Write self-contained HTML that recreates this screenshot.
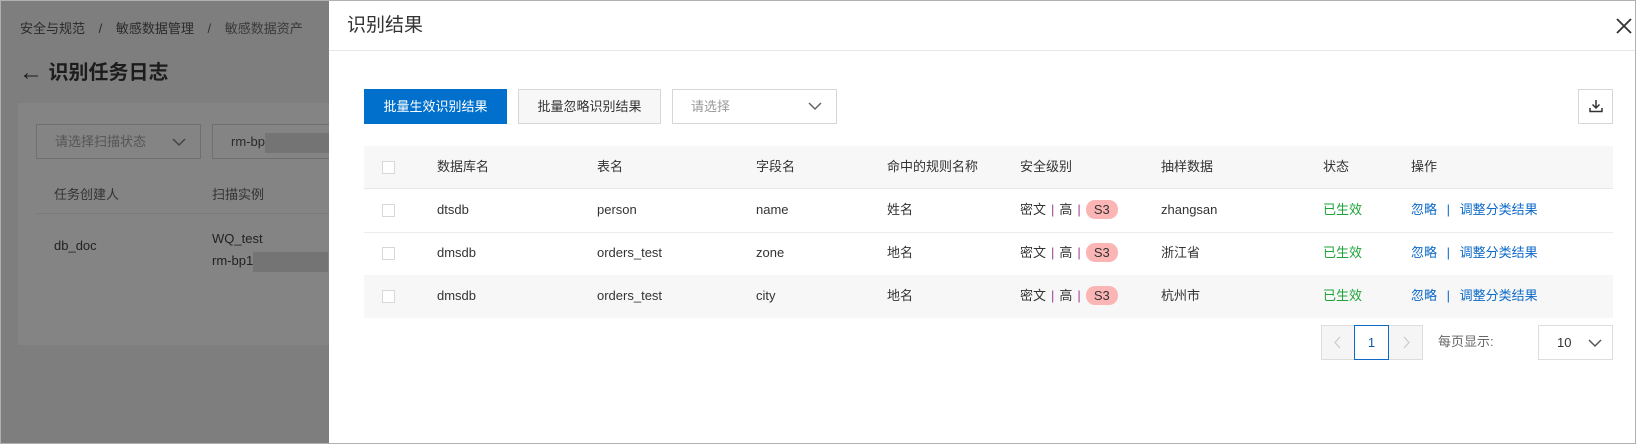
<!DOCTYPE html>
<html><head><meta charset="utf-8"><style>
*{box-sizing:border-box;margin:0;padding:0}
body{width:1636px;height:444px;overflow:hidden;position:relative;background:#7e7e7e;font-family:"Liberation Sans","Noto Sans CJK SC",sans-serif;font-size:13px;color:#333}
.abs{position:absolute}
.frame{position:absolute;left:0;top:0;width:1636px;height:444px;border:1px solid #b0b0b0;pointer-events:none;z-index:10}
.panel{position:absolute;left:329px;top:0;width:1307px;height:444px;background:#fff}
.btn{position:absolute;top:89px;height:35px;line-height:35px;text-align:center;font-size:13px}
.th,.td{position:absolute;white-space:nowrap;line-height:20px;height:20px}
.cb{position:absolute;left:382px;width:13px;height:13px;border:1px solid #d8d8d8;background:#fff}
.sep{color:#a0409a;margin:0 5px}
.s3{display:inline-block;background:#fbb5b5;border-radius:9px;padding:0 8px;height:19px;line-height:19px;vertical-align:top}
.g{color:#1ea33a}.b{color:#0d6ac8}
</style></head><body>
<div class="abs" style="left:20px;top:18px;color:#2a2a2a;font-size:13px;white-space:nowrap">安全与规范 <span style="margin:0 10px">/</span> 敏感数据管理 <span style="margin:0 10px;color:#333">/</span> <span style="color:#3a3a3a">敏感数据资产</span></div>
<div class="abs" style="left:19px;top:56px;color:#1c1c1c;font-size:20px;font-weight:bold;white-space:nowrap"><span style="font-size:24px;font-weight:normal;vertical-align:-1px">←</span> 识别任务日志</div>
<div class="abs" style="left:18px;top:103px;width:311px;height:242px;background:#848484"></div>
<div class="abs" style="left:36px;top:124px;width:165px;height:35px;border:1px solid #6f6f6f;color:#555;line-height:33px;padding-left:18px;white-space:nowrap">请选择扫描状态<svg style="position:absolute;right:14px;top:13px" width="14" height="9" viewBox="0 0 14 9"><path d="M1 1L7 7L13 1" fill="none" stroke="#444" stroke-width="1.5"/></svg></div>
<div class="abs" style="left:212px;top:124px;width:117px;height:35px;border:1px solid #6f6f6f;border-right:none;color:#2a2a2a;line-height:33px;padding-left:18px;white-space:nowrap;overflow:hidden">rm-bp<span style="display:inline-block;width:65px;height:20px;background:#747474;vertical-align:middle"></span></div>
<div class="abs" style="left:36px;top:176px;width:293px;height:38px;border-bottom:1px solid #7a7a7a;color:#333;line-height:38px"><span style="margin-left:18px">任务创建人</span><span style="position:absolute;left:176px">扫描实例</span></div>
<div class="abs" style="left:54px;top:238px;color:#222">db_doc</div>
<div class="abs" style="left:212px;top:228px;color:#222;line-height:22px;white-space:nowrap;width:117px;overflow:hidden">WQ_test<br>rm-bp1<span style="display:inline-block;width:75px;height:20px;background:#747474;vertical-align:middle"></span></div>

<div class="panel">
  <div class="abs" style="left:18px;top:10px;font-size:19px;color:#333">识别结果</div>
  <svg class="abs" style="left:1286px;top:17px" width="18" height="18" viewBox="0 0 18 18"><path d="M2 2L16 16M16 2L2 16" stroke="#333" stroke-width="1.8"/></svg>
  <div class="abs" style="left:0;top:50px;width:1307px;height:1px;background:#e6e6e6"></div>
  <div class="abs" style="right:0;top:0;width:1px;height:444px;background:#b8b8b8"></div>
</div>
<div class="btn" style="left:364px;width:143px;background:#0070cc;color:#fff">批量生效识别结果</div>
<div class="btn" style="left:518px;width:143px;border:1px solid #d7d7d7;background:#f7f7f7;line-height:33px">批量忽略识别结果</div>
<div class="btn" style="left:672px;width:165px;border:1px solid #d7d7d7;text-align:left;padding-left:18px;color:#999;line-height:33px">请选择<svg style="position:absolute;right:14px;top:12px" width="14" height="9" viewBox="0 0 14 9"><path d="M1 1L7 7L13 1" fill="none" stroke="#666" stroke-width="1.5"/></svg></div>
<div class="abs" style="left:1578px;top:89px;width:35px;height:35px;border:1px solid #d7d7d7"><svg style="position:absolute;left:10px;top:9px" width="14" height="14" viewBox="0 0 14 14"><path d="M7 1V9M3.5 5.5L7 9L10.5 5.5M1 9V12.5H13V9" fill="none" stroke="#333" stroke-width="1.5"/></svg></div>

<div class="abs" style="left:364px;top:146px;width:1249px;height:43px;background:#f7f7f7;border-bottom:1px solid #e8e8e8"></div>
<div class="abs" style="left:364px;top:232px;width:1249px;height:1px;background:#ececec"></div>
<div class="abs" style="left:364px;top:275px;width:1249px;height:1px;background:#ececec"></div>
<div class="abs" style="left:364px;top:275px;width:1249px;height:43px;background:#f7f7f7"></div>

<div class="cb" style="top:161px"></div>
<div class="th" style="left:437px;top:157px">数据库名</div>
<div class="th" style="left:597px;top:157px">表名</div>
<div class="th" style="left:756px;top:157px">字段名</div>
<div class="th" style="left:887px;top:157px">命中的规则名称</div>
<div class="th" style="left:1020px;top:157px">安全级别</div>
<div class="th" style="left:1161px;top:157px">抽样数据</div>
<div class="th" style="left:1323px;top:157px">状态</div>
<div class="th" style="left:1411px;top:157px">操作</div>

<div class="cb" style="top:204px"></div>
<div class="td" style="left:437px;top:200px">dtsdb</div>
<div class="td" style="left:597px;top:200px">person</div>
<div class="td" style="left:756px;top:200px">name</div>
<div class="td" style="left:887px;top:200px">姓名</div>
<div class="td" style="left:1020px;top:200px">密文<span class="sep">|</span>高<span class="sep">|</span><span class="s3">S3</span></div>
<div class="td" style="left:1161px;top:200px">zhangsan</div>
<div class="td g" style="left:1323px;top:200px">已生效</div>
<div class="td b" style="left:1411px;top:200px">忽略 <span style="margin:0 6px">|</span> 调整分类结果</div>

<div class="cb" style="top:247px"></div>
<div class="td" style="left:437px;top:243px">dmsdb</div>
<div class="td" style="left:597px;top:243px">orders_test</div>
<div class="td" style="left:756px;top:243px">zone</div>
<div class="td" style="left:887px;top:243px">地名</div>
<div class="td" style="left:1020px;top:243px">密文<span class="sep">|</span>高<span class="sep">|</span><span class="s3">S3</span></div>
<div class="td" style="left:1161px;top:243px">浙江省</div>
<div class="td g" style="left:1323px;top:243px">已生效</div>
<div class="td b" style="left:1411px;top:243px">忽略 <span style="margin:0 6px">|</span> 调整分类结果</div>

<div class="cb" style="top:290px"></div>
<div class="td" style="left:437px;top:286px">dmsdb</div>
<div class="td" style="left:597px;top:286px">orders_test</div>
<div class="td" style="left:756px;top:286px">city</div>
<div class="td" style="left:887px;top:286px">地名</div>
<div class="td" style="left:1020px;top:286px">密文<span class="sep">|</span>高<span class="sep">|</span><span class="s3">S3</span></div>
<div class="td" style="left:1161px;top:286px">杭州市</div>
<div class="td g" style="left:1323px;top:286px">已生效</div>
<div class="td b" style="left:1411px;top:286px">忽略 <span style="margin:0 6px">|</span> 调整分类结果</div>

<div class="abs" style="left:1321px;top:325px;width:102px;height:35px;border:1px solid #ddd;background:#f5f5f5"></div>
<svg class="abs" style="left:1334px;top:336px" width="8" height="13" viewBox="0 0 8 13"><path d="M6 1L1 6.5L6 12" fill="none" stroke="#ccc" stroke-width="1.3"/></svg>
<svg class="abs" style="left:1402px;top:336px" width="8" height="13" viewBox="0 0 8 13"><path d="M2 1L7 6.5L2 12" fill="none" stroke="#ccc" stroke-width="1.3"/></svg>
<div class="abs" style="left:1354px;top:325px;width:35px;height:35px;border:1px solid #0d6ac8;background:#fff;text-align:center;line-height:33px;color:#0d5aa8">1</div>
<div class="abs" style="left:1438px;top:332px;color:#666;line-height:20px">每页显示:</div>
<div class="abs" style="left:1538px;top:325px;width:75px;height:35px;border:1px solid #ddd;line-height:33px;padding-left:18px">10<svg style="position:absolute;right:10px;top:13px" width="14" height="9" viewBox="0 0 14 9"><path d="M1 1L7 7L13 1" fill="none" stroke="#555" stroke-width="1.5"/></svg></div>
<div class="frame"></div>
</body></html>
